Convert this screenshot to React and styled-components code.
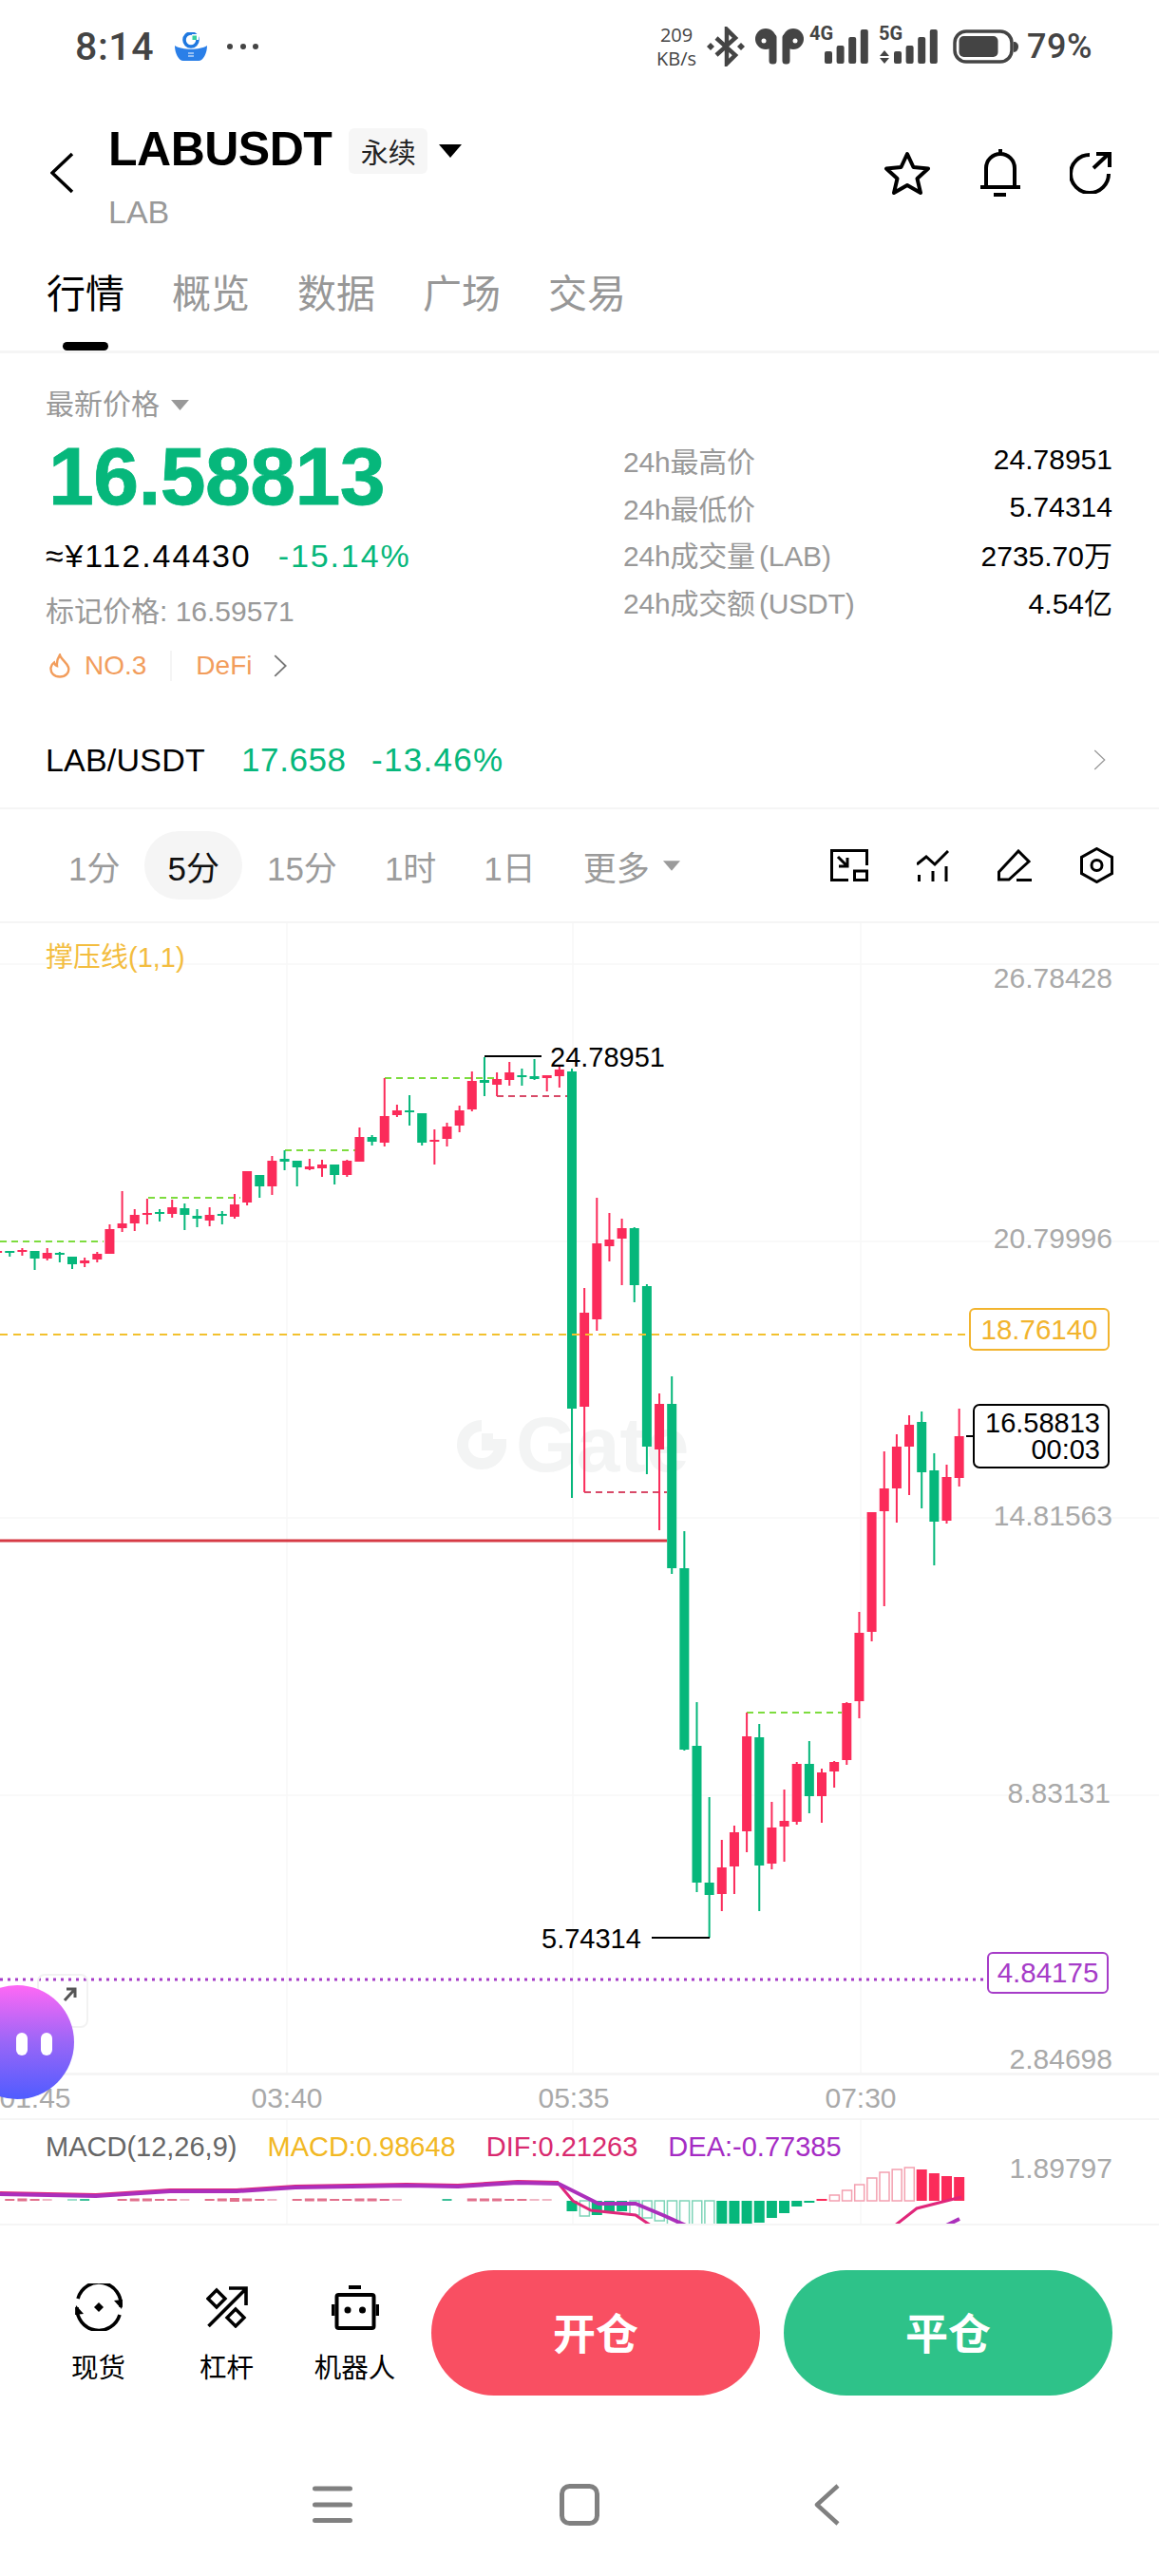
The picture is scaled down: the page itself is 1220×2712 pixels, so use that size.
import React from "react";
import styled, { createGlobalStyle } from "styled-components";

const FONT = `"Liberation Sans", "Noto Sans CJK SC", sans-serif`;
const GREEN = "#06b77b";
const RED = "#fb2b5a";
const GRAY = "#999999";
const AXIS = "#a9a9a9";
const LINE = "#f5f5f5";

// [wickTop, wickBottom, bodyTop, bodyBottom] in page pixels, oldest first (k = -46)
const CANDLES = [
  ["r", 1317, 1320, 1317, 1319], ["g", 1317, 1323, 1317, 1318], ["r", 1314, 1322, 1316, 1317],
  ["g", 1317, 1337, 1317, 1325], ["r", 1314, 1327, 1319, 1325], ["g", 1318, 1329, 1319, 1321],
  ["g", 1323, 1336, 1323, 1331], ["r", 1324, 1334, 1327, 1330], ["r", 1318, 1329, 1320, 1326],
  ["r", 1289, 1320, 1294, 1320], ["r", 1254, 1297, 1288, 1293], ["r", 1273, 1296, 1279, 1288],
  ["r", 1262, 1289, 1277, 1278], ["g", 1273, 1286, 1276, 1278], ["r", 1263, 1282, 1271, 1278],
  ["g", 1267, 1295, 1272, 1279], ["g", 1273, 1292, 1280, 1283], ["r", 1271, 1291, 1279, 1285],
  ["g", 1275, 1289, 1278, 1280], ["r", 1257, 1283, 1268, 1281], ["r", 1233, 1269, 1233, 1266],
  ["g", 1237, 1261, 1237, 1249], ["r", 1217, 1258, 1222, 1249], ["g", 1211, 1232, 1220, 1223],
  ["g", 1222, 1249, 1222, 1229], ["r", 1220, 1232, 1228, 1231], ["r", 1221, 1239, 1226, 1230],
  ["g", 1226, 1247, 1226, 1237], ["r", 1221, 1239, 1222, 1237], ["r", 1187, 1223, 1197, 1223],
  ["g", 1195, 1206, 1197, 1202], ["r", 1135, 1207, 1175, 1203], ["r", 1163, 1176, 1169, 1174],
  ["g", 1153, 1185, 1169, 1171], ["g", 1172, 1206, 1172, 1203], ["r", 1189, 1226, 1200, 1202],
  ["r", 1182, 1207, 1186, 1199], ["r", 1164, 1192, 1169, 1185], ["r", 1128, 1170, 1138, 1168],
  ["g", 1113, 1154, 1137, 1140], ["r", 1129, 1154, 1136, 1142], ["r", 1118, 1143, 1129, 1137],
  ["g", 1125, 1143, 1132, 1134], ["g", 1115, 1137, 1133, 1136], ["r", 1132, 1149, 1132, 1135],
  ["r", 1123, 1145, 1126, 1133],
  ["g", 1125, 1577, 1128, 1483], ["r", 1356, 1571, 1382, 1481], ["r", 1261, 1401, 1309, 1389],
  ["r", 1277, 1328, 1305, 1312], ["r", 1283, 1353, 1293, 1304], ["g", 1292, 1371, 1293, 1353],
  ["g", 1352, 1552, 1354, 1523], ["r", 1467, 1611, 1478, 1526], ["g", 1449, 1657, 1478, 1651],
  ["g", 1612, 1843, 1651, 1842], ["g", 1792, 1992, 1838, 1982], ["g", 1892, 2040, 1982, 1995],
  ["r", 1937, 2012, 1966, 1994], ["r", 1922, 1994, 1929, 1965], ["r", 1803, 1950, 1828, 1928],
  ["g", 1815, 2012, 1829, 1964], ["r", 1897, 1968, 1924, 1962], ["r", 1884, 1960, 1917, 1923],
  ["r", 1855, 1921, 1857, 1918], ["g", 1833, 1909, 1857, 1891], ["r", 1862, 1919, 1866, 1891],
  ["r", 1854, 1882, 1855, 1865], ["r", 1792, 1858, 1793, 1853], ["r", 1697, 1809, 1719, 1791],
  ["r", 1592, 1728, 1592, 1718], ["r", 1528, 1691, 1567, 1591], ["r", 1510, 1603, 1523, 1567],
  ["r", 1490, 1574, 1500, 1523], ["g", 1486, 1588, 1497, 1550], ["g", 1530, 1648, 1548, 1602],
  ["r", 1542, 1604, 1555, 1601], ["r", 1483, 1565, 1512, 1556],
];

const candleX = (index) => 602 + (index - 46) * 13.15;

// MACD bars from k = 0: [bar end, filled]
const HIST = [
  [2328, 1], [2333, 0], [2332, 1], [2330, 1], [2328, 1], [2332, 0], [2335, 0], [2338, 0],
  [2342, 0], [2342, 0], [2342, 0], [2342, 0], [2342, 1], [2342, 1], [2342, 1], [2340, 1],
  [2335, 1], [2330, 1], [2323, 1], [2319, 1], [2315, 1], [2311, 0], [2306, 0], [2300, 0],
  [2293, 0], [2287, 0], [2284, 0], [2282, 0], [2284, 1], [2288, 1], [2291, 1], [2292, 1],
];

const MACD_LEFT = [0, 2, 3, 2, 1, 0, 1, 2, 0, 0, 2, 3, 3, 2, 2, 1, 0, 2, 3, 4, 3, 2, 1, 0, 2, 3, 3, 2, 2, 3, 3, 2, 1, 0, 0, 0, 2, 0, 3, 3, 3, 2, 2, 1, 1, 0];
const MACD_TEAL = [6, 7, 8, 36];

const GlobalStyle = createGlobalStyle`
  html, body {
    margin: 0;
    padding: 0;
    background: #fff;
    font-family: ${FONT};
  }
  * {
    box-sizing: border-box;
  }
  svg {
    display: block;
    flex-shrink: 0;
  }
`;

const Page = styled.div`
  width: 1220px;
  height: 2712px;
  overflow: hidden;
  background: #fff;
  color: #000;
`;

const StatusBar = styled.div`
  height: 97px;
  display: flex;
  align-items: center;
  padding: 0 70px 0 79px;
  color: #444;
`;

const Clock = styled.span`
  font-family: Roboto, ${FONT};
  font-size: 41px;
  font-weight: 500;
  letter-spacing: 0.6px;
  margin-right: 22px;
`;

const StatusDots = styled.div`
  display: flex;
  gap: 7.5px;
  margin-left: 21px;
`;

const Dot = styled.i`
  width: 6px;
  height: 6px;
  border-radius: 50%;
  background: #444;
`;

const StatusRight = styled.div`
  margin-left: auto;
  display: flex;
  align-items: center;
`;

const Speed = styled.div`
  width: 42px;
  margin-right: 11px;
  font-family: "Open Sans", ${FONT};
  font-size: 20px;
  line-height: 25px;
  text-align: center;
  white-space: nowrap;
`;

const Battery = styled.span`
  font-family: Roboto, ${FONT};
  font-size: 36px;
  font-weight: 500;
  letter-spacing: 0.5px;
  margin-left: 9px;
`;

const Header = styled.div`
  height: 170px;
  display: flex;
  align-items: center;
  padding: 0 50px 0 53px;
`;

const BackButton = styled.div`
  margin-right: 36px;
`;

const TitleBlock = styled.div`
  padding-top: 9px;
`;

const TitleRow = styled.div`
  display: flex;
  align-items: center;
  height: 48px;
`;

const Symbol = styled.h1`
  margin: 0 18px 0 0;
  font-size: 50px;
  line-height: 48px;
  font-weight: 700;
  letter-spacing: -0.5px;
`;

const ContractPill = styled.span`
  width: 83px;
  height: 48px;
  margin: 3px 12px 0 0;
  display: flex;
  align-items: center;
  justify-content: center;
  background: #f6f6f6;
  border-radius: 6px;
  font-size: 29px;
  color: #222;
`;

const TitleCaret = styled.div`
  margin-top: 3px;
`;

const SubSymbol = styled.div`
  margin-top: 25px;
  font-size: 34px;
  line-height: 34px;
  color: ${GRAY};
`;

const HeaderActions = styled.div`
  margin-left: auto;
  display: flex;
  align-items: center;
  gap: 52px;
`;

const Tabs = styled.div`
  height: 105px;
  display: flex;
  gap: 51px;
  padding: 22px 0 0 49px;
  border-bottom: 3px solid ${LINE};
`;

const Tab = styled.div`
  position: relative;
  font-size: 41px;
  line-height: 42px;
  height: 42px;
  width: 81px;
  white-space: nowrap;
  color: ${(p) => (p.$active ? "#000" : "#979797")};

  ${(p) =>
    p.$active &&
    `&::after {
      content: "";
      position: absolute;
      left: 17px;
      top: 71px;
      width: 48px;
      height: 9px;
      border-radius: 5px;
      background: #000;
    }`}
`;

const PriceSection = styled.section`
  height: 380px;
  display: flex;
  padding: 40px 49px 0 48px;
`;

const PriceLeft = styled.div`
  width: 608px;
`;

const LatestLabel = styled.div`
  display: flex;
  align-items: center;
  gap: 12px;
  font-size: 30px;
  line-height: 28px;
  color: ${GRAY};
`;

const BigPrice = styled.div`
  margin: 19px 0 0 3px;
  font-size: 86px;
  line-height: 84px;
  font-weight: 700;
  color: ${GREEN};
  letter-spacing: -0.6px;
  -webkit-text-stroke: 0.8px ${GREEN};
`;

const ConvertRow = styled.div`
  display: flex;
  gap: 28px;
  margin-top: 22px;
  font-size: 34px;
  line-height: 40px;
  letter-spacing: 1.9px;
`;

const GreenText = styled.span`
  color: ${GREEN};
`;

const MarkPrice = styled.div`
  margin-top: 21px;
  font-size: 30px;
  line-height: 36px;
  color: ${GRAY};
`;

const TagRow = styled.div`
  margin-top: 21px;
  height: 36px;
  display: flex;
  align-items: center;
  font-size: 28px;
  color: #f29d5c;
`;

const TagDivider = styled.i`
  width: 2px;
  height: 32px;
  background: ${LINE};
  margin: 0 25px;
`;

const PriceRight = styled.div`
  flex: 1;
  padding-top: 47px;
`;

const StatRow = styled.div`
  height: 49.7px;
  display: flex;
  align-items: center;
  justify-content: space-between;
  font-size: 30px;
`;

const StatLabel = styled.span`
  color: ${GRAY};
  word-spacing: -4px;
  letter-spacing: -0.2px;
`;

const PairRow = styled.div`
  height: 100px;
  display: flex;
  align-items: center;
  padding: 0 55px 2px 48px;
  border-bottom: 2px solid ${LINE};
  font-size: 34px;
`;

const PairName = styled.span`
  width: 206px;
  letter-spacing: 0.2px;
`;

const PairPrice = styled.span`
  width: 137px;
  font-size: 35px;
  letter-spacing: 0.6px;
  color: ${GREEN};
`;

const PairChange = styled.span`
  font-size: 35px;
  letter-spacing: 1.3px;
  color: ${GREEN};
`;

const PairArrow = styled.div`
  margin-left: auto;
`;

const IntervalRow = styled.div`
  height: 120px;
  display: flex;
  align-items: center;
  gap: 2px;
  padding: 0 48px 0 48px;
  border-bottom: 2px solid ${LINE};
`;

const Interval = styled.div`
  height: 72px;
  padding: 0 24px;
  display: flex;
  align-items: center;
  gap: 14px;
  border-radius: 36px;
  font-size: 35px;
  color: ${(p) => (p.$active ? "#111" : "#9b9b9b")};
  background: ${(p) => (p.$active ? "#f5f5f5" : "transparent")};
`;

const ChartTools = styled.div`
  margin-left: auto;
  display: flex;
  align-items: center;
  gap: 51px;
`;

const Chart = styled.div`
  position: relative;
  height: 1210px;
`;

const ChartCanvas = styled.svg`
  position: relative;
  width: 1220px;
  height: 1210px;
`;

const Watermark = styled.div`
  position: absolute;
  left: 481px;
  top: 508px;
  display: flex;
  align-items: center;
  gap: 10px;
  font-size: 82px;
  line-height: 82px;
  font-weight: 700;
  color: #f3f4f4;
`;

const Legend = styled.div`
  position: absolute;
  left: 48px;
  top: 20px;
  font-size: 29px;
  line-height: 32px;
  color: #f3bd3f;
`;

const AxisPrice = styled.div`
  position: absolute;
  right: ${(p) => p.$right || 49}px;
  top: ${(p) => p.$top}px;
  transform: translateY(-50%);
  font-size: 30px;
  color: ${AXIS};
`;

const ExtremePrice = styled.div`
  position: absolute;
  left: ${(p) => p.$left}px;
  top: ${(p) => p.$top}px;
  transform: translateY(-50%);
  font-size: 29px;
  color: #000;
`;

const PriceTag = styled.div`
  position: absolute;
  left: ${(p) => p.$left}px;
  top: ${(p) => p.$top}px;
  width: ${(p) => p.$width}px;
  height: ${(p) => p.$height}px;
  display: flex;
  align-items: center;
  justify-content: center;
  background: #fff;
  border: 2px solid ${(p) => p.$color};
  border-radius: 6px;
  font-size: 29.5px;
  color: ${(p) => p.$color};
`;

const LastPriceTag = styled.div`
  position: absolute;
  left: 1024px;
  top: 506px;
  width: 144px;
  height: 68px;
  padding: 4px 8px 0 0;
  background: #fff;
  border: 2.5px solid #000;
  border-radius: 7px;
  font-size: 29px;
  line-height: 28px;
  text-align: right;
`;

const ExpandBox = styled.div`
  position: absolute;
  left: 39px;
  top: 1106px;
  width: 54px;
  height: 57px;
  border: 2px solid #f2f2f2;
  border-radius: 8px;
  display: flex;
  justify-content: flex-end;
  padding: 12px 9px 0 0;
`;

const Bubble = styled.div`
  position: absolute;
  z-index: 2;
  left: -42px;
  top: 1118px;
  width: 120px;
  height: 120px;
  border-radius: 50%;
  background: linear-gradient(180deg, #ff68f5 0%, #9a66f7 50%, #4f5cff 100%);
  display: flex;
  align-items: center;
  gap: 14px;
  padding: 4px 0 0 59px;
`;

const BubbleEye = styled.i`
  width: 12px;
  height: 24px;
  border-radius: 6px;
  background: #fff;
`;

const TimeAxis = styled.div`
  position: relative;
  height: 50px;
  border-top: 3px solid ${LINE};
  border-bottom: 2px solid ${LINE};
`;

const TimeLabel = styled.span`
  position: absolute;
  left: ${(p) => p.$x}px;
  top: 7px;
  transform: translateX(-50%);
  font-size: 30px;
  color: ${AXIS};
`;

const MacdPanel = styled.div`
  position: relative;
  height: 111px;
  border-bottom: 2px solid ${LINE};
`;

const MacdCanvas = styled.svg`
  width: 1220px;
  height: 109px;
`;

const MacdLegend = styled.div`
  position: absolute;
  left: 48px;
  top: 12px;
  font-size: 29px;
  line-height: 32px;
  display: flex;
  gap: 32px;
`;

const MacdItem = styled.span`
  color: ${(p) => p.$color};
`;

const ActionBar = styled.div`
  height: 218px;
  display: flex;
  padding: 47px 49px 0 36px;
`;

const Tool = styled.div`
  width: 135px;
  padding-top: 14px;
  display: flex;
  flex-direction: column;
  align-items: center;
`;

const ToolIcon = styled.div`
  height: 50px;
  display: flex;
  align-items: center;
`;

const ToolLabel = styled.span`
  margin-top: 24px;
  font-size: 28.5px;
  line-height: 30px;
  white-space: nowrap;
`;

const TradeButton = styled.button`
  width: 346px;
  height: 132px;
  margin-left: ${(p) => p.$gap}px;
  padding: 0 0 3px;
  border: 0;
  border-radius: 66px;
  background: ${(p) => p.$color};
  color: #fff;
  font-family: ${FONT};
  font-size: 45px;
  font-weight: 700;
`;

const NavBar = styled.div`
  display: flex;
  justify-content: center;
  align-items: center;
  gap: 218px;
  padding-top: 54px;
`;

const NavSlot = styled.div`
  width: 42px;
  display: flex;
  justify-content: center;
`;

const TagSpacer = styled.span`
  width: 23px;
`;

const Triangle = ({ w, h, color }) => (
  <svg width={w} height={h} viewBox="0 0 24 14">
    <path d="M0 0H24L12 14Z" fill={color} />
  </svg>
);

const Chevron = ({ w, h, color, stroke, flip }) => (
  <svg width={w} height={h} viewBox="0 0 25 44">
    <path
      d={flip ? "M2 2L23 22L2 42" : "M23 2L2 22L23 42"}
      fill="none"
      stroke={color}
      strokeWidth={stroke}
    />
  </svg>
);

const AppLogo = () => (
  <svg width="34" height="30" viewBox="0 0 34 30">
    <circle cx="17" cy="8" r="7" fill="none" stroke="#1f78e0" strokeWidth="3.6" />
    <rect x="18" y="2" width="7" height="6" fill="#fff" />
    <rect x="18.5" y="3.5" width="4.5" height="4.5" fill="#35cfa0" />
    <path d="M0 14C8 19 26 19 34 14C34 22 30 30 25 30H9C4 30 0 22 0 14Z" fill="#2a7fe8" />
    <path d="M14 22H20M14 25H20" stroke="#fff" strokeWidth="1.2" />
  </svg>
);

const Bluetooth = () => (
  <svg width="40" height="42" viewBox="0 0 40 42">
    <path d="M10 12L30 30L21 39V3L30 12L10 30" fill="none" stroke="#444" strokeWidth="4.5" />
    <path d="M0 21L4 17L8 21L4 25ZM32 21L36 17L40 21L36 25Z" fill="#444" />
  </svg>
);

const Earbuds = () => (
  <svg width="51" height="38" viewBox="0 0 51 38" style={{ margin: "0 6px 0 11px" }}>
    <circle cx="11" cy="11" r="11" fill="#444" />
    <rect x="14.5" y="6" width="8" height="31.5" rx="3.5" fill="#444" />
    <circle cx="9" cy="13" r="2.5" fill="#fff" />
    <circle cx="40" cy="11" r="11" fill="#444" />
    <rect x="28.5" y="6" width="8" height="31.5" rx="3.5" fill="#444" />
    <circle cx="42" cy="13" r="2.5" fill="#fff" />
  </svg>
);

const SIGNAL_TOPS = [26, 20, 11, 3];

const Signal = ({ label, arrows, margin }) => (
  <svg width="62" height="54" viewBox="0 -6 62 54" style={{ marginRight: margin }}>
    <text x="0" y="14" fontFamily={"Roboto, sans-serif"} fontWeight="700" fontSize="20" fill="#444">
      {label}
    </text>
    {arrows && <path d="M1 31L6 25L11 31ZM1 33H11L6 39Z" fill="#444" />}
    {SIGNAL_TOPS.map((top, i) => (
      <rect key={i} x={16 + i * 12.6} y={top} width="8" height={39 - top} rx="2" fill="#444" />
    ))}
  </svg>
);

const BatteryIcon = () => (
  <svg width="69" height="36" viewBox="0 0 69 36">
    <rect x="2" y="2" width="60" height="32" rx="12" fill="none" stroke="#444" strokeWidth="3.5" />
    <rect x="6.5" y="7" width="41" height="22" rx="5" fill="#444" />
    <path d="M64 13C67 13 69 15 69 18C69 21 67 24 64 24Z" fill="#444" />
  </svg>
);

const StarIcon = () => (
  <svg width="50" height="46" viewBox="0 0 50 46">
    <path
      d="M25 3L31.5 17L47 18.5L35.5 29L39 44L25 36L11 44L14.5 29L3 18.5L18.5 17Z"
      fill="none"
      stroke="#000"
      strokeWidth="4"
      strokeLinejoin="round"
    />
  </svg>
);

const BellIcon = () => (
  <svg width="42" height="50" viewBox="0 0 42 50">
    <path d="M6 40V20a15 15 0 0 1 30 0V40M0 40H42M21 0V5M14 48H27" fill="none" stroke="#000" strokeWidth="4" />
  </svg>
);

const ShareIcon = () => (
  <svg width="44" height="44" viewBox="0 0 44 44">
    <path d="M21 3A20 20 0 1 0 41 23" fill="none" stroke="#000" strokeWidth="4" />
    <path d="M25 17L41 2M28 2H42V16" fill="none" stroke="#000" strokeWidth="4" />
  </svg>
);

const FullscreenIcon = () => (
  <svg width="40" height="34" viewBox="0 0 40 34">
    <path d="M38.5 17V1.5H1.5V32.5H19M8 8L18 18M18 9V18H9" fill="none" stroke="#000" strokeWidth="3" />
    <rect x="25.5" y="23" width="13" height="9.5" fill="none" stroke="#000" strokeWidth="3" />
  </svg>
);

const IndicatorIcon = () => (
  <svg width="34" height="33" viewBox="0 0 34 33">
    <path d="M0 15L10 7L19 15L33 1M2.5 26V33M17 22V33M31 17V33" fill="none" stroke="#000" strokeWidth="3" />
  </svg>
);

const PencilIcon = () => (
  <svg width="36" height="34" viewBox="0 0 36 34">
    <path d="M1.5 24L22 2L33 13L12 32H1.5ZM20 32.5H36" fill="none" stroke="#000" strokeWidth="3" />
  </svg>
);

const SettingsIcon = () => (
  <svg width="35" height="38" viewBox="0 0 35 38">
    <path d="M17.5 1.5L33.5 10.5V27.5L17.5 36.5L1.5 27.5V10.5Z" fill="none" stroke="#000" strokeWidth="3" />
    <circle cx="17.5" cy="19" r="5.5" fill="none" stroke="#000" strokeWidth="3" />
  </svg>
);

const FlameIcon = () => (
  <svg width="24" height="26" viewBox="0 0 24 26" style={{ marginLeft: 3, marginRight: 14 }}>
    <path
      d="M12 1.5C13 6 19 9 21 14.5C22.5 20 18 24.5 12 24.5C6 24.5 2 20.5 2.5 15C3 12 4.5 10.5 6 9.5C6.5 11.5 7.5 12.5 9 13C8.5 8.5 10 4.5 12 1.5Z"
      fill="none"
      stroke="#f29d5c"
      strokeWidth="2.4"
    />
  </svg>
);

const SwapIcon = () => (
  <svg width="50" height="50" viewBox="0 0 50 50">
    <path d="M3 16A23 23 0 0 1 48 25M2 25A23 23 0 0 0 47 33" fill="none" stroke="#000" strokeWidth="3.6" />
    <path d="M49 27L41 18L50 17ZM1 23L9 32L0 33Z" fill="#000" />
    <path d="M25 20L30 25L25 30L20 25Z" fill="#000" />
  </svg>
);

const LeverageIcon = () => (
  <svg width="44" height="44" viewBox="0 0 44 44">
    <path d="M2.5 42L41 3.5M24 2H42V20" fill="none" stroke="#000" strokeWidth="3.6" />
    <path d="M11 4L20 13L11 22L2 13ZM31 24L40 33L31 42L22 33Z" fill="none" stroke="#000" strokeWidth="3.4" />
  </svg>
);

const RobotIcon = () => (
  <svg width="50" height="47" viewBox="0 0 50 47">
    <rect x="5.5" y="10" width="39" height="35" rx="2" fill="none" stroke="#000" strokeWidth="4" />
    <path d="M0 20H3.5V32H0ZM46.5 20H50V32H46.5ZM18 0H31V4H18Z" fill="#000" />
    <circle cx="17" cy="26" r="3.5" fill="#000" />
    <circle cx="32.5" cy="26" r="3.5" fill="#000" />
  </svg>
);

const GateLogo = () => (
  <svg width="52" height="56" viewBox="0 0 52 56">
    <path d="M26 8A20 20 0 1 0 46 28H26" fill="none" stroke="#f3f4f4" strokeWidth="12" />
    <rect x="26" y="16" width="12" height="12" fill="#f3f4f4" />
  </svg>
);

const CandleChart = () => (
  <ChartCanvas viewBox="0 972 1220 1210">
    <g stroke="#f7f7f7" strokeWidth="1.5">
      {[1015, 1307, 1598, 1890].map((y) => (
        <line key={y} x1="0" x2="1220" y1={y} y2={y} />
      ))}
      {[302, 603, 906].map((x) => (
        <line key={x} x1={x} x2={x} y1="972" y2="2183" />
      ))}
    </g>
    <g stroke="#7ddc3e" strokeWidth="2" strokeDasharray="7 5">
      <line x1="0" x2="109" y1="1307" y2="1307" />
      <line x1="156" x2="253" y1="1261" y2="1261" />
      <line x1="300" x2="374" y1="1211" y2="1211" />
      <line x1="405" x2="522" y1="1135" y2="1135" />
      <line x1="786" x2="886" y1="1803" y2="1803" />
    </g>
    <g stroke="#d84a68" strokeWidth="2" strokeDasharray="7 5">
      <line x1="523" x2="597" y1="1154" y2="1154" />
      <line x1="615" x2="702" y1="1571" y2="1571" />
    </g>
    <line x1="0" x2="702" y1="1622" y2="1622" stroke="#d63a45" strokeWidth="3" />
    {CANDLES.map(([color, wickTop, wickBottom, bodyTop, bodyBottom], i) => {
      const fill = color === "r" ? RED : GREEN;
      const x = candleX(i);
      return (
        <g key={i} fill={fill}>
          <rect x={x - 1} y={wickTop} width="2" height={wickBottom - wickTop} />
          <rect x={x - 5} y={bodyTop} width="10" height={Math.max(bodyBottom - bodyTop, 2)} />
        </g>
      );
    })}
    <line x1="0" x2="1016" y1="1405" y2="1405" stroke="#f2c12e" strokeWidth="2" strokeDasharray="8 6" />
    <line x1="0" x2="1037" y1="2084" y2="2084" stroke="#a63cc8" strokeWidth="3" strokeDasharray="3 5" />
    <line x1="510" x2="570" y1="1112" y2="1112" stroke="#000" strokeWidth="2" />
    <line x1="686" x2="747" y1="2040" y2="2040" stroke="#000" strokeWidth="2" />
    <line x1="1017" x2="1024" y1="1512" y2="1512" stroke="#000" strokeWidth="2" />
  </ChartCanvas>
);

const MacdChart = () => (
  <MacdCanvas viewBox="0 2232 1220 109">
    <g stroke="#f7f7f7" strokeWidth="1.5">
      {[302, 603, 906].map((x) => (
        <line key={x} x1={x} x2={x} y1="2232" y2="2343" />
      ))}
    </g>
    {MACD_LEFT.map((h, i) =>
      h === 0 ? null : (
        <rect
          key={i}
          x={candleX(i) - 5}
          y={2316 - h / 2}
          width="10"
          height={h}
          fill={MACD_TEAL.includes(i) ? "#3cbf98" : "#e2708c"}
        />
      )
    )}
    {HIST.map(([end, filled], k) => {
      const up = end < 2317;
      const color = up ? RED : GREEN;
      const y = up ? end : 2317;
      const height = Math.abs(end - 2317);
      const x = 602 + k * 13.15 - 5.5;
      return filled ? (
        <rect key={k} x={x} y={y} width="11" height={height} fill={color} />
      ) : (
        <rect
          key={k}
          x={x + 0.75}
          y={y}
          width="10"
          height={height}
          fill="#fff"
          stroke={up ? "#f3a0b0" : "#7fd4b8"}
          strokeWidth="1.5"
        />
      );
    })}
    <g fill="none">
      <path d="M0 2309L101 2311L179 2306L249 2306L311 2302L428 2300L482 2301L545 2297L588 2298" stroke="#e0267a" strokeWidth="4" />
      <path d="M588 2299L603 2317L622 2327L669 2332L685 2343M942 2343L965 2325L1012 2313" stroke="#e0267a" strokeWidth="3" />
      <path
        d="M0 2310L101 2312L179 2307L249 2307L311 2303L428 2301L482 2302L545 2298L588 2299L630 2320L669 2320L700 2333L722 2343M996 2343L1010 2336"
        stroke="#ab2fbb"
        strokeWidth="4"
      />
    </g>
  </MacdCanvas>
);

export default function App() {
  return (
    <Page>
      <GlobalStyle />
      <StatusBar>
        <Clock>8:14</Clock>
        <AppLogo />
        <StatusDots>
          <Dot />
          <Dot />
          <Dot />
        </StatusDots>
        <StatusRight>
          <Speed>
            209
            <br />
            KB/s
          </Speed>
          <Bluetooth />
          <Earbuds />
          <Signal label="4G" margin={11} />
          <Signal label="5G" arrows margin={16} />
          <BatteryIcon />
          <Battery>79%</Battery>
        </StatusRight>
      </StatusBar>

      <Header>
        <BackButton>
          <Chevron w={25} h={44} color="#000" stroke={3.5} />
        </BackButton>
        <TitleBlock>
          <TitleRow>
            <Symbol>LABUSDT</Symbol>
            <ContractPill>永续</ContractPill>
            <TitleCaret>
              <Triangle w={24} h={14} color="#000" />
            </TitleCaret>
          </TitleRow>
          <SubSymbol>LAB</SubSymbol>
        </TitleBlock>
        <HeaderActions>
          <StarIcon />
          <BellIcon />
          <ShareIcon />
        </HeaderActions>
      </Header>

      <Tabs>
        <Tab $active>行情</Tab>
        <Tab>概览</Tab>
        <Tab>数据</Tab>
        <Tab>广场</Tab>
        <Tab>交易</Tab>
      </Tabs>

      <PriceSection>
        <PriceLeft>
          <LatestLabel>
            最新价格
            <Triangle w={19} h={11} color={GRAY} />
          </LatestLabel>
          <BigPrice>16.58813</BigPrice>
          <ConvertRow>
            <span>≈¥112.44430</span>
            <GreenText>-15.14%</GreenText>
          </ConvertRow>
          <MarkPrice>标记价格: 16.59571</MarkPrice>
          <TagRow>
            <FlameIcon />
            NO.3
            <TagDivider />
            DeFi
            <TagSpacer />
            <Chevron w={14} h={24} color="#777" stroke={3.5} flip />
          </TagRow>
        </PriceLeft>
        <PriceRight>
          <StatRow>
            <StatLabel>24h最高价</StatLabel>
            <span>24.78951</span>
          </StatRow>
          <StatRow>
            <StatLabel>24h最低价</StatLabel>
            <span>5.74314</span>
          </StatRow>
          <StatRow>
            <StatLabel>24h成交量 (LAB)</StatLabel>
            <span>2735.70万</span>
          </StatRow>
          <StatRow>
            <StatLabel>24h成交额 (USDT)</StatLabel>
            <span>4.54亿</span>
          </StatRow>
        </PriceRight>
      </PriceSection>

      <PairRow>
        <PairName>LAB/USDT</PairName>
        <PairPrice>17.658</PairPrice>
        <PairChange>-13.46%</PairChange>
        <PairArrow>
          <Chevron w={15} h={22} color="#999" stroke={2.5} flip />
        </PairArrow>
      </PairRow>

      <IntervalRow>
        <Interval>1分</Interval>
        <Interval $active>5分</Interval>
        <Interval>15分</Interval>
        <Interval>1时</Interval>
        <Interval>1日</Interval>
        <Interval>
          更多
          <Triangle w={18} h={11} color="#9b9b9b" />
        </Interval>
        <ChartTools>
          <FullscreenIcon />
          <IndicatorIcon />
          <PencilIcon />
          <SettingsIcon />
        </ChartTools>
      </IntervalRow>

      <Chart>
        <Watermark>
          <GateLogo />
          Gate
        </Watermark>
        <CandleChart />
        <Legend>撑压线(1,1)</Legend>
        <AxisPrice $top={58}>26.78428</AxisPrice>
        <AxisPrice $top={332}>20.79996</AxisPrice>
        <AxisPrice $top={624}>14.81563</AxisPrice>
        <AxisPrice $top={916} $right={51}>8.83131</AxisPrice>
        <AxisPrice $top={1196}>2.84698</AxisPrice>
        <ExtremePrice $left={579} $top={141}>24.78951</ExtremePrice>
        <ExtremePrice $left={570} $top={1069}>5.74314</ExtremePrice>
        <PriceTag $left={1020} $top={405} $width={148} $height={45} $color="#f2b42e">18.76140</PriceTag>
        <LastPriceTag>
          16.58813
          <br />
          00:03
        </LastPriceTag>
        <PriceTag $left={1039} $top={1083} $width={128} $height={44} $color="#a63cc8">4.84175</PriceTag>
        <ExpandBox>
          <svg width="20" height="16" viewBox="0 0 20 16">
            <path d="M6 14L16 3M8 2H17V11" fill="none" stroke="#555" strokeWidth="3" />
          </svg>
        </ExpandBox>
        <Bubble>
          <BubbleEye />
          <BubbleEye />
        </Bubble>
      </Chart>

      <TimeAxis>
        <TimeLabel $x={37}>01:45</TimeLabel>
        <TimeLabel $x={302}>03:40</TimeLabel>
        <TimeLabel $x={604}>05:35</TimeLabel>
        <TimeLabel $x={906}>07:30</TimeLabel>
      </TimeAxis>

      <MacdPanel>
        <MacdChart />
        <MacdLegend>
          <MacdItem $color="#666">MACD(12,26,9)</MacdItem>
          <MacdItem $color="#f2b824">MACD:0.98648</MacdItem>
          <MacdItem $color="#d92a6f">DIF:0.21263</MacdItem>
          <MacdItem $color="#a52cc4">DEA:-0.77385</MacdItem>
        </MacdLegend>
        <AxisPrice $top={51}>1.89797</AxisPrice>
      </MacdPanel>

      <ActionBar>
        <Tool>
          <ToolIcon>
            <SwapIcon />
          </ToolIcon>
          <ToolLabel>现货</ToolLabel>
        </Tool>
        <Tool>
          <ToolIcon>
            <LeverageIcon />
          </ToolIcon>
          <ToolLabel>杠杆</ToolLabel>
        </Tool>
        <Tool>
          <ToolIcon>
            <RobotIcon />
          </ToolIcon>
          <ToolLabel>机器人</ToolLabel>
        </Tool>
        <TradeButton $color="#f94f62" $gap={13}>开仓</TradeButton>
        <TradeButton $color="#2ec289" $gap={25}>平仓</TradeButton>
      </ActionBar>

      <NavBar>
        <NavSlot>
          <svg width="42" height="44" viewBox="0 0 42 44">
            <path d="M2.5 5H39.5M2.5 22H39.5M2.5 38.5H39.5" stroke="#808080" strokeWidth="5" strokeLinecap="round" />
          </svg>
        </NavSlot>
        <NavSlot>
          <svg width="42" height="44" viewBox="0 0 42 44">
            <rect x="2.5" y="2.5" width="37" height="39" rx="8" fill="none" stroke="#808080" strokeWidth="5" />
          </svg>
        </NavSlot>
        <NavSlot>
          <svg width="27" height="44" viewBox="0 0 27 44">
            <path d="M25 2L3 22L25 42" fill="none" stroke="#808080" strokeWidth="4.5" strokeLinejoin="round" />
          </svg>
        </NavSlot>
      </NavBar>
    </Page>
  );
}
